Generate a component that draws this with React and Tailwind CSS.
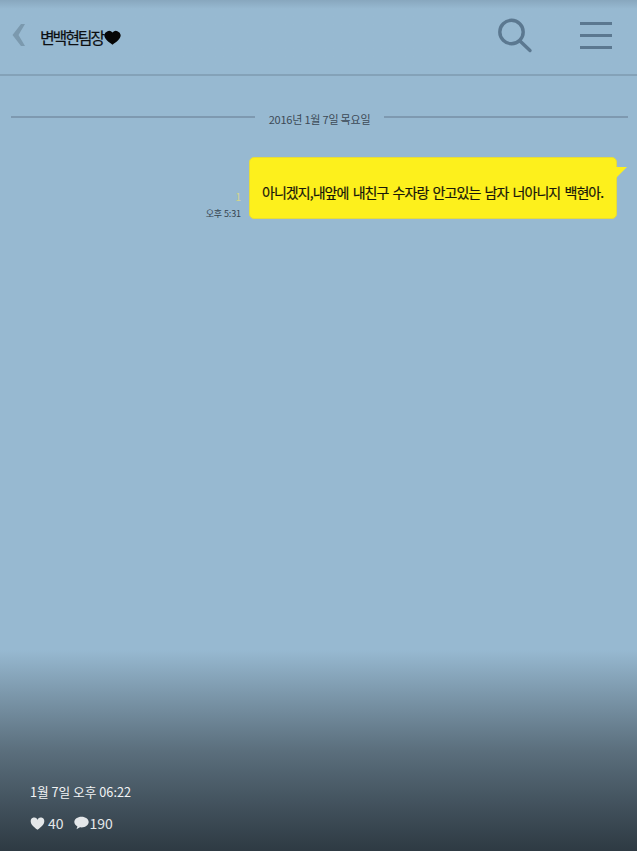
const FONT = "font-['Noto_Sans_CJK_KR','Noto_Sans',sans-serif]";

export default function App() {
  return (
    <div className={`w-[637px] h-[851px] flex flex-col overflow-hidden bg-[#97b9d1] ${FONT}`}>
      {/* Header */}
      <header className="h-[76px] shrink-0 flex items-center border-b-2 border-[#84a2b8] bg-gradient-to-b from-[#88a7be] via-[#97b9d1] via-[12%] to-[#97b9d1]">
        <svg className="ml-[12px] w-[13px] h-[22px] -mt-[4px]" viewBox="0 0 13 22">
          <path d="M9 0 L13 0 L6.500 11 L13 22 L9 22 L0.500 11 Z" fill="#7b99ae" />
        </svg>
        <div className="ml-[15px] flex items-center text-[16px] leading-[20px] text-[#0c0f12] tracking-[-2.1px] [-webkit-text-stroke:0.2px_#0c0f12]">
          변백현팀장
          <svg className="ml-[1px] w-[17px] h-[15px]" viewBox="0 0 24 22">
            <path d="M12 21.500C6 18 0 13 0 7.500A7 7 0 0 1 12 3.500 7 7 0 0 1 24 7.500c0 5.500-6 10.500-12 14z" fill="#060606" />
          </svg>
        </div>
        <svg className="ml-auto -mt-[4px] w-[36px] h-[36px]" viewBox="0 0 36 36" fill="none" stroke="#5b7890" strokeWidth="3.400">
          <circle cx="14.500" cy="15" r="11.700" />
          <line x1="23" y1="24" x2="33" y2="33.500" strokeLinecap="round" />
        </svg>
        <div className="ml-[47px] mr-[25px] -mt-[3px] w-[32px] flex flex-col gap-[8.700px]">
          <div className="h-[3px] bg-[#5b7890]" />
          <div className="h-[3px] bg-[#5b7890]" />
          <div className="h-[3px] bg-[#5b7890]" />
        </div>
      </header>

      {/* Messages */}
      <main className="flex-1 min-h-0 pt-[32px] pl-[11px] pr-[9px]">
        <div className="flex items-center">
          <div className="flex-1 h-[2px] bg-[#7e99b0]" />
          <span className="mx-[14px] translate-y-[2px] text-[11px] leading-[18px] tracking-[-0.2px] text-[#3c4a56]">2016년 1월 7일 목요일</span>
          <div className="flex-1 h-[2px] bg-[#7e99b0]" />
        </div>
        <div className="mt-[31px] flex justify-end items-end">
          <div className="mr-[8px] flex flex-col items-end">
            <span className="text-[10px] leading-[12px] text-[#d6d68a]">1</span>
            <span className="mt-[4px] translate-y-[1px] text-[9px] leading-[12px] tracking-[-0.1px] text-[#35434f]">오후 5:31</span>
          </div>
          <div className="relative mr-[11px] w-[368px] h-[62px] rounded-[5px] bg-[#fdf01c] border border-[#e6dc3a] flex items-center pl-[12px] pt-[9px] text-[14px] text-[#17170a] tracking-[-0.95px] [word-spacing:2px] [-webkit-text-stroke:0.2px_#17170a] whitespace-nowrap">
            아니겠지,내앞에 내친구 수자랑 안고있는 남자 너아니지 백현아.
            <svg className="absolute -right-[11px] top-[9px] w-[11px] h-[11px]" viewBox="0 0 11 11">
              <path d="M0 0 H11 L0 11 Z" fill="#fdf01c" />
            </svg>
          </div>
        </div>
      </main>

      {/* Footer */}
      <footer className="h-[201px] shrink-0 flex flex-col justify-end pl-[30px] pb-[19px] bg-gradient-to-b from-[#97b9d1] via-[#5b6f7d] via-[50%] to-[#2e3a43] text-white">
        <div className="text-[12.700px] leading-[18px] text-[#f2f4f5]">1월 7일 오후 06:22</div>
        <div className="mt-[13px] flex items-center text-[14px] leading-[18px] text-[#e4e7e9]">
          <svg className="w-[15px] h-[13px] mr-[3px]" viewBox="0 0 24 22">
            <path d="M12 21.500C5 16 .5 12 .5 7A6 6 0 0 1 12 4.500 6 6 0 0 1 23.500 7c0 5-4.500 9-11.500 14.500z" fill="#e4e7e9" />
          </svg>
          40
          <svg className="ml-[10px] mr-[1px] w-[15px] h-[14px]" viewBox="0 0 24 22">
            <path d="M12 1C5.600 1 .5 4.800 .5 9.500c0 3 2 5.500 5 7L4 21l5.500-3.200c.8.1 1.700.2 2.500.2 6.400 0 11.500-3.800 11.500-8.500S18.400 1 12 1z" fill="#e4e7e9" />
          </svg>
          190
        </div>
      </footer>
    </div>
  );
}
